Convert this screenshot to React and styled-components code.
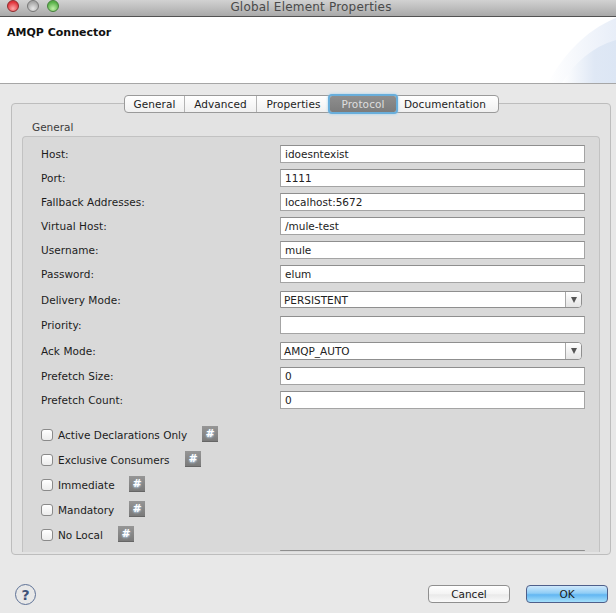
import React from "react";
import styled, { createGlobalStyle } from "styled-components";

const Global = createGlobalStyle`
  html, body { margin: 0; padding: 0; background: #e8e8e8; }
  * { box-sizing: border-box; }
  body { font-family: "DejaVu Sans", "Liberation Sans", sans-serif; font-size: 10.5px; color: #1c1c1c; }
`;

const Page = styled.div`
  width: 616px;
  height: 613px;
  overflow: hidden;
  display: flex;
  flex-direction: column;
  background: #e8e8e8;
`;

const TitleBar = styled.div`
  height: 17px;
  flex: none;
  position: relative;
  display: flex;
  align-items: center;
  justify-content: center;
  padding: 0 0 3px 6px;
  background: linear-gradient(#d2d2d2, #a9a9a9);
  border-bottom: 1px solid #525252;
  font-size: 12px;
  letter-spacing: 0.2px;
  color: #4a4a4a;
`;

const Lights = styled.div`
  position: absolute;
  left: 7px;
  top: 0;
  display: flex;
  gap: 8px;
`;

const Light = styled.span`
  width: 12px;
  height: 12px;
  border-radius: 50%;
  border: 1px solid ${(p) => p.$edge};
  background: radial-gradient(circle at 50% 75%, ${(p) => p.$glow}, ${(p) => p.$base} 70%);
`;

const Header = styled.div`
  height: 67px;
  flex: none;
  position: relative;
  background: #fff;
  border-bottom: 1px solid #a6a6a6;
  padding: 9px 7px;
  font-size: 11px;
  font-weight: bold;
  color: #111;
`;

const Swoosh = styled.svg`
  position: absolute;
  right: 0;
  bottom: 0;
`;

const Body = styled.div`
  flex: 1;
  display: flex;
  flex-direction: column;
  padding: 11px 5px 0 11px;
`;

const Tabs = styled.div`
  align-self: flex-start;
  margin-left: 113px;
  margin-bottom: -10px;
  height: 18px;
  display: flex;
  position: relative;
  z-index: 1;
  background: linear-gradient(#fff, #f0f0f0);
  border: 1px solid #9a9a9a;
  border-radius: 4px;
`;

const Tab = styled.div`
  width: ${(p) => p.$w}px;
  display: flex;
  align-items: center;
  justify-content: center;
  padding-right: ${(p) => p.$pr || 0}px;
  letter-spacing: 0.1px;
  position: relative;
  color: ${(p) => (p.$active ? "#dedede" : "#1c1c1c")};
  background: ${(p) => (p.$active ? "linear-gradient(#8e8e8e, #7c7c7c)" : "transparent")};
  border-radius: ${(p) => (p.$active ? "2px" : "0")};
  box-shadow: ${(p) => (p.$active ? "0 0 0 2px #68aedb, 0 0 3px 2px #a0cfee" : "none")};
  border-right: ${(p) => (p.$sep ? "1px solid #b4b4b4" : "none")};
`;

const Folder = styled.div`
  height: 452px;
  flex: none;
  background: #e3e3e3;
  border: 1px solid #bdbdbd;
  border-radius: 4px;
  padding: 14px 10px 2px 10px;
  display: flex;
  flex-direction: column;
  overflow: hidden;
`;

const GroupLabel = styled.div`
  height: 18px;
  flex: none;
  margin-left: 10px;
  padding-top: 3px;
  color: #3c3c3c;
`;

const Group = styled.div`
  flex: 1;
  min-height: 0;
  overflow: hidden;
  background: #d9d9d9;
  border: 1px solid #c2c2c2;
  border-bottom: 0;
  border-radius: 4px 4px 0 0;
  padding: 8px 14px 0 18px;
`;

const Row = styled.div`
  display: flex;
  align-items: center;
  justify-content: ${(p) => (p.$end ? "flex-end" : "space-between")};
  height: ${(p) => p.$h || 18}px;
  margin-bottom: ${(p) => p.$gap}px;
`;

const Label = styled.span`
  letter-spacing: 0.05px;
`;

const Field = styled.div`
  width: 305px;
  height: 100%;
  display: flex;
  align-items: center;
  padding-left: 4px;
  background: #fff;
  border: 1px solid #a4a4a4;
  border-top-color: #8e8e8e;
  color: #222;
`;

const Select = styled.div`
  width: 302px;
  height: 100%;
  display: flex;
  align-items: center;
  justify-content: space-between;
  padding-left: 3px;
  margin-right: 3px;
  background: #fff;
  border: 1px solid #8f8f8f;
  border-radius: 0 4px 4px 0;
  color: #222;
`;

const Arrow = styled.span`
  width: 16px;
  height: 100%;
  display: flex;
  align-items: center;
  justify-content: center;
  border-left: 1px solid #a8a8a8;
  background: linear-gradient(#fff, #e4e4e4);
  border-radius: 0 3px 3px 0;
  &::after {
    content: "";
    border-left: 3.5px solid transparent;
    border-right: 3.5px solid transparent;
    border-top: 6px solid #555;
  }
`;

const Checks = styled.div`
  margin-top: 17px;
  display: flex;
  flex-direction: column;
  gap: 9px;
`;

const CheckRow = styled.div`
  height: 16px;
  display: flex;
  align-items: center;
`;

const Box = styled.span`
  width: 12px;
  height: 12px;
  flex: none;
  margin: 2px 5px 0 0;
  background: linear-gradient(#fff, #ececec);
  border: 1px solid #8a8a8a;
  border-radius: 3px;
`;

const CheckText = styled.span`
  width: ${(p) => p.$w}px;
  flex: none;
  margin-top: 2px;
`;

const Hash = styled.span`
  width: 16px;
  height: 16px;
  flex: none;
  display: flex;
  align-items: center;
  justify-content: center;
  background: linear-gradient(#969696, #7a7a7a);
  border-bottom: 1px solid #666;
  color: #fff;
  font-size: 11px;
  font-weight: bold;
  text-shadow: 0 1px 2px #bfe0ff;
`;

const Clip = styled.div`
  height: 1px;
  margin-top: 8px;
  overflow: hidden;
`;

const Footer = styled.div`
  flex: 1;
  display: flex;
  align-items: flex-start;
  padding: 30px 3px 0 4px;
`;

const Help = styled.div`
  width: 21px;
  height: 21px;
  margin-top: -1px;
  border: 1.5px solid #5d7196;
  border-radius: 50%;
  display: flex;
  align-items: center;
  justify-content: center;
  color: #3f5278;
  font-size: 14px;
  font-weight: bold;
`;

const Buttons = styled.div`
  margin-left: auto;
  display: flex;
  gap: 16px;
`;

const Button = styled.div`
  width: 82px;
  height: 18px;
  display: flex;
  align-items: center;
  justify-content: center;
  border-radius: 4px;
  border: 1px solid ${(p) => (p.$primary ? "#4f5f8a" : "#8f8f8f")};
  background: ${(p) =>
    p.$primary
      ? "linear-gradient(#cfe8fb 0%, #8fcdf6 45%, #62b6f2 55%, #a5e0fb 100%)"
      : "linear-gradient(#fff, #f3f3f3 50%, #e9e9e9 55%, #fafafa)"};
  color: #1a1a1a;
`;

const fields = [
  { label: "Host:", value: "idoesntexist", gap: 6 },
  { label: "Port:", value: "1111", gap: 6 },
  { label: "Fallback Addresses:", value: "localhost:5672", gap: 6 },
  { label: "Virtual Host:", value: "/mule-test", gap: 6 },
  { label: "Username:", value: "mule", gap: 6 },
  { label: "Password:", value: "elum", gap: 8 },
  { label: "Delivery Mode:", value: "PERSISTENT", gap: 8, select: true, h: 17 },
  { label: "Priority:", value: "", gap: 8 },
  { label: "Ack Mode:", value: "AMQP_AUTO", gap: 7, select: true },
  { label: "Prefetch Size:", value: "0", gap: 6 },
  { label: "Prefetch Count:", value: "0", gap: 0 },
];

const checks = [
  { label: "Active Declarations Only", w: 144 },
  { label: "Exclusive Consumers", w: 127 },
  { label: "Immediate", w: 71 },
  { label: "Mandatory", w: 71 },
  { label: "No Local", w: 60 },
];

const tabs = [
  { label: "General", w: 60, sep: true },
  { label: "Advanced", w: 72, sep: true },
  { label: "Properties", w: 73 },
  { label: "Protocol", w: 66, active: true },
  { label: "Documentation", w: 102, pr: 4 },
];

export default function App() {
  return (
    <Page>
      <Global />
      <TitleBar>
        <Lights>
          <Light $base="#e0343c" $glow="#ffa8a8" $edge="#8e2a2c" />
          <Light $base="#a8a8a8" $glow="#e8e8e8" $edge="#777" />
          <Light $base="#58b048" $glow="#c0f0a8" $edge="#44803a" />
        </Lights>
        Global Element Properties
      </TitleBar>
      <Header>
        AMQP Connector
        <Swoosh width="68" height="66" viewBox="0 0 68 66">
          <defs>
            <linearGradient id="swoosh" x1="0" x2="1" y1="0.5" y2="0.5">
              <stop offset="0" stopColor="#ffffff" />
              <stop offset="1" stopColor="#e8eef8" />
            </linearGradient>
            <linearGradient id="swooshInner" x1="0" x2="1" y1="0.5" y2="0.5">
              <stop offset="0" stopColor="#ffffff" />
              <stop offset="0.6" stopColor="#dfe8f5" />
              <stop offset="1" stopColor="#dce6f4" />
            </linearGradient>
          </defs>
          <path d="M0 66 C14 40 36 14 68 1 L68 66 Z" fill="url(#swoosh)" />
          <path d="M14 66 C26 46 44 30 68 23 L68 66 Z" fill="url(#swooshInner)" />
        </Swoosh>
      </Header>
      <Body>
        <Tabs>
          {tabs.map((t) => (
            <Tab key={t.label} $w={t.w} $sep={t.sep} $active={t.active} $pr={t.pr}>
              {t.label}
            </Tab>
          ))}
        </Tabs>
        <Folder>
          <GroupLabel>General</GroupLabel>
          <Group>
            {fields.map((f) => (
              <Row key={f.label} $gap={f.gap} $h={f.h}>
                <Label>{f.label}</Label>
                {f.select ? (
                  <Select>
                    {f.value}
                    <Arrow />
                  </Select>
                ) : (
                  <Field>{f.value}</Field>
                )}
              </Row>
            ))}
            <Checks>
              {checks.map((c) => (
                <CheckRow key={c.label}>
                  <Box />
                  <CheckText $w={c.w}>{c.label}</CheckText>
                  <Hash>#</Hash>
                </CheckRow>
              ))}
            </Checks>
            <Clip>
              <Row $gap={0} $end>
                <Field />
              </Row>
            </Clip>
          </Group>
        </Folder>
        <Footer>
          <Help>?</Help>
          <Buttons>
            <Button>Cancel</Button>
            <Button $primary>OK</Button>
          </Buttons>
        </Footer>
      </Body>
    </Page>
  );
}
